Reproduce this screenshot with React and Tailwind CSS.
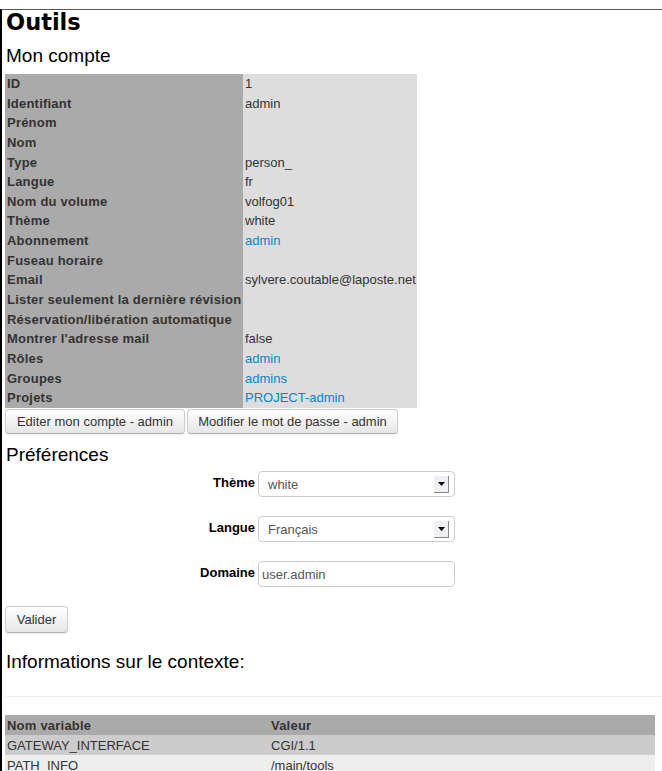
const ACCOUNT = [
  ['ID', '1'],
  ['Identifiant', 'admin'],
  ['Prénom', ''],
  ['Nom', ''],
  ['Type', 'person_'],
  ['Langue', 'fr'],
  ['Nom du volume', 'volfog01'],
  ['Thème', 'white'],
  ['Abonnement', 'admin', true],
  ['Fuseau horaire', ''],
  ['Email', 'sylvere.coutable@laposte.net'],
  ['Lister seulement la dernière révision', ''],
  ['Réservation/libération automatique', ''],
  ["Montrer l'adresse mail", 'false'],
  ['Rôles', 'admin', true],
  ['Groupes', 'admins', true],
  ['Projets', 'PROJECT-admin', true],
]

const ENV = [
  ['GATEWAY_INTERFACE', 'CGI/1.1', 'bg-[#cccccc]'],
  ['PATH_INFO', '/main/tools', 'bg-[#eeeeee]'],
]

function Btn({ children, className = '' }) {
  return (
    <button
      className={`h-[25px] px-0 whitespace-nowrap text-[13px] text-[#333] bg-linear-to-b from-white to-[#e6e6e6] border border-[#cccccc] border-b-[#b3b3b3] rounded-[4px] shadow-[0_1px_2px_rgba(0,0,0,0.08)] ${className}`}
    >
      {children}
    </button>
  )
}

function Select({ value }) {
  return (
    <div className="w-[197px] h-[26px] flex items-center justify-between border border-[#cccccc] rounded-[4px] bg-white pl-[9px] pr-[5px]">
      <span className="text-[13px] text-[#555] mt-[1px]">{value}</span>
      <span className="w-[15px] h-[17px] mt-[2px] flex items-center justify-center bg-[#eef0f4] border-r border-b border-[#888]">
        <svg width="7" height="4" viewBox="0 0 7 4">
          <path d="M0 0h7L3.5 4z" fill="#000" />
        </svg>
      </span>
    </div>
  )
}

export default function App() {
  return (
    <div className="pt-[9px] bg-white min-h-[771px] font-['Liberation_Sans',Arial,sans-serif] text-[#333]">
      <div className="border-t border-[#555] border-l-2 border-l-black pl-[3px] min-h-[762px]">
        {/* Title */}
        <h1 className="font-['DejaVu_Sans',sans-serif] font-bold text-[22.5px] leading-[25px] text-black pl-[1px]">Outils</h1>
        <h2 className="text-[19px] leading-[38px] pt-[2px] -mb-[1px] text-black pl-[1px]">Mon compte</h2>

        {/* Account table */}
        <div className="w-[412px] text-[13px]">
          {ACCOUNT.map(([k, v, link]) => (
            <div key={k} className="flex h-[19.65px] leading-[20.5px]">
              <div className="w-[238px] bg-[#aaaaaa] pl-[2px] font-bold tracking-[0.22px] text-[#333] whitespace-nowrap">{k}</div>
              <div className={`flex-1 bg-[#dddddd] pl-[2px] whitespace-nowrap ${link ? 'text-[#0088cc]' : 'text-[#333]'}`}>{v}</div>
            </div>
          ))}
        </div>

        <div className="flex gap-[2px] mt-[1px]">
          <Btn className="w-[180px]">Editer mon compte - admin</Btn>
          <Btn className="w-[211px]">Modifier le mot de passe - admin</Btn>
        </div>

        {/* Preferences */}
        <h2 className="text-[19px] leading-[24px] mt-[9px] text-black pl-[1px]">Préférences</h2>
        <div className="mt-[4px] flex flex-col gap-[19px]">
          {[
            ['Thème', <Select value="white" />],
            ['Langue', <Select value="Français" />],
            [
              'Domaine',
              <div className="w-[197px] h-[26px] flex items-center border border-[#cccccc] rounded-[4px] bg-white pl-[3px]">
                <span className="text-[13px] text-[#555] mt-[1px]">user.admin</span>
              </div>,
            ],
          ].map(([label, ctl]) => (
            <div key={label} className="flex items-center gap-[3px]">
              <label className="w-[250px] text-right font-bold text-[13px] text-black -mt-[2px]">{label}</label>
              {ctl}
            </div>
          ))}
        </div>

        <Btn className="mt-[19px] h-[27px] w-[63px]">Valider</Btn>

        {/* Context */}
        <h2 className="text-[19px] leading-[24px] mt-[17px] text-black pl-[1px]">Informations sur le contexte:</h2>
        <div className="mt-[22px] border-t border-[#eeeeee]" />
        <div className="mt-[18px] w-[650px] text-[13px]">
          <div className="flex h-[20px] leading-[21px] bg-[#aaaaaa] font-bold tracking-[0.22px]">
            <div className="w-[264px] pl-[2px]">Nom variable</div>
            <div className="pl-[2px]">Valeur</div>
          </div>
          {ENV.map(([k, v, bg]) => (
            <div key={k} className={`flex h-[20px] leading-[21px] ${bg}`}>
              <div className="w-[264px] pl-[2px]">{k}</div>
              <div className="pl-[2px]">{v}</div>
            </div>
          ))}
        </div>
      </div>
    </div>
  )
}
